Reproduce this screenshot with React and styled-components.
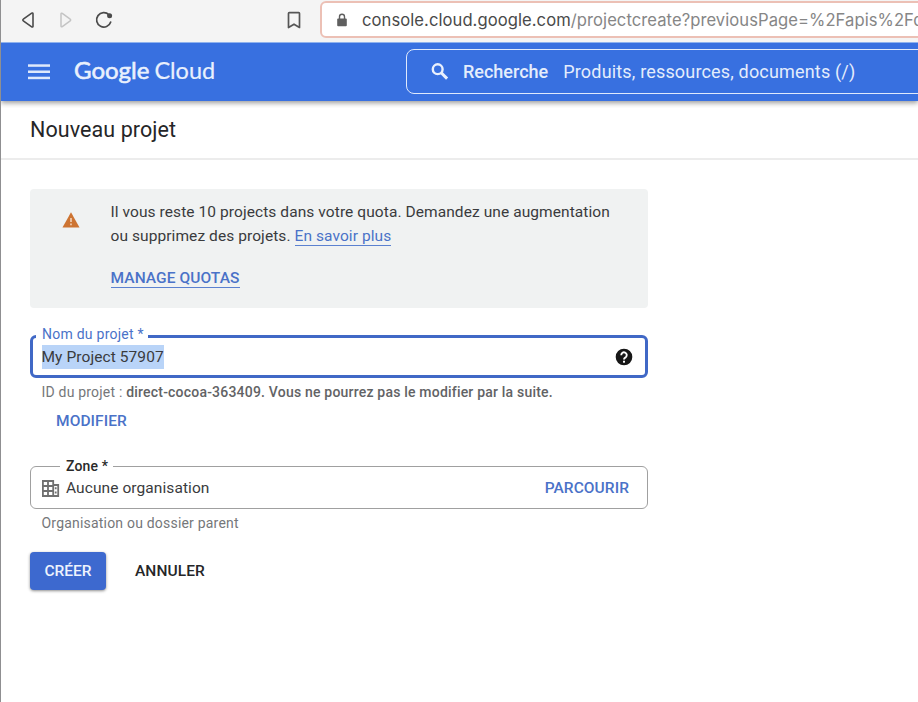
import React from "react";
import styled, { createGlobalStyle, css } from "styled-components";

const GlobalStyle = createGlobalStyle`
  *, *::before, *::after { box-sizing: border-box; }
  body {
    margin: 0;
    background: #fff;
    color: #3a3b3d;
    font-family: Roboto, "Liberation Sans", sans-serif;
    overflow: hidden;
  }
`;

const Window = styled.div`
  width: 918px;
  height: 702px;
  overflow: hidden;
  border-left: 1px solid #8f8f91;
  background: #fff;
`;

const BrowserBar = styled.div`
  display: flex;
  align-items: flex-start;
  height: 42px;
  background: #f4f4f4;
  overflow: hidden;
`;

const NavIcons = styled.div`
  display: flex;
  align-items: center;
  width: 319px;
  height: 39px;
  padding-left: 19px;
  flex: none;

  svg { display: block; flex: none; }
  svg + svg { margin-left: 17px; }
  svg:nth-child(3) { margin-left: 20px; }
  svg:last-child { margin-left: 171px; }
`;

const AddressField = styled.div`
  display: flex;
  align-items: center;
  width: 640px;
  height: 37px;
  margin-top: 1px;
  padding: 0 0 0 13px;
  flex: none;
  border: 2px solid #ecc0b5;
  border-radius: 6px;
  background: #fff;
  white-space: nowrap;
  overflow: hidden;
`;

const Url = styled.div`
  margin-left: 13px;
  font: 400 16.6px/24px Inter, "Liberation Sans", sans-serif;
  letter-spacing: 0.06px;
  color: #868686;
`;

const Host = styled.span`
  color: #4a4a4a;
`;

const HeaderClip = styled.div`
  overflow: hidden;
  height: 66px;
  margin-bottom: -7px;
`;

const CloudHeader = styled.header`
  display: flex;
  align-items: center;
  height: 59px;
  padding: 0 0 1px 27px;
  border-top: 1px solid #8fb2ee;
  background: #3870e0;
  box-shadow: 0 2px 5px rgba(0, 0, 0, 0.4);

  svg { flex: none; display: block; }
`;

const Brand = styled.div`
  display: flex;
  align-items: baseline;
  gap: 5px;
  width: 332px;
  margin: -3px 0 0 23px;
  flex: none;
  font: 400 23px/30px Lato, "Open Sans", sans-serif;
  color: #e9f0fd;
`;

const BrandName = styled.span`
  font-size: ${(p) => (p.$strong ? 24 : 23.5)}px;
  -webkit-text-stroke: ${(p) => (p.$strong ? "0.6px #e9f0fd" : "0.2px #e9f0fd")};
`;

const SearchBox = styled.div`
  display: flex;
  align-items: center;
  width: 550px;
  height: 45px;
  padding-left: 22px;
  flex: none;
  border: 1px solid #dfe9fc;
  border-radius: 8px;
  color: #e4edfc;
  font-size: 18px;
  line-height: 24px;
  white-space: nowrap;
`;

const SearchLabel = styled.span`
  margin-left: 12px;
  font-weight: 500;
`;

const SearchHint = styled.span`
  margin-left: 15px;
  letter-spacing: 0.17px;
`;

const TitleBar = styled.div`
  display: flex;
  align-items: center;
  height: 59px;
  border-bottom: 2px solid #ececec;
  padding: 0 0 0 29px;
`;

const Title = styled.h1`
  margin: 0;
  font-size: 21.5px;
  line-height: 28px;
  letter-spacing: 0.08px;
  font-weight: 400;
  color: #252628;
`;

const Form = styled.main`
  display: flex;
  flex-direction: column;
  align-items: flex-start;
  width: 618px;
  margin: 29px 0 0 29px;
`;

const Notice = styled.section`
  display: flex;
  width: 618px;
  height: 119px;
  padding: 11px 0 0 32px;
  border-radius: 4px;
  background: #f0f2f2;
  font-size: 15.5px;
  line-height: 24px;
  letter-spacing: 0.08px;

  > svg { display: block; flex: none; margin-top: 11px; }
`;

const NoticeBody = styled.div`
  margin-left: 30.5px;
  white-space: nowrap;
`;

const Paragraph = styled.p`
  margin: 0 0 18px;
`;

const Link = styled.a`
  display: inline-block;
  height: 22px;
  border-bottom: 1px solid #5b81d0;
  color: #4a72c8;
  font-weight: ${(p) => (p.$action ? 500 : 400)};
  white-space: nowrap;
`;

const Outline = styled.fieldset`
  display: flex;
  align-items: center;
  width: 618px;
  min-width: 0;
  margin: 0;
  padding: ${(p) => (p.$focused ? "0 11px 0 8.5px" : "1px 18px 0 11px")};
  border-radius: 6px;
  border: ${(p) => (p.$focused ? "3px solid #4068c6" : "1px solid #a0a0a0")};
  height: ${(p) => (p.$focused ? 51 : 52)}px;
  margin-top: ${(p) => (p.$focused ? 19 : 24)}px;
  font-size: 15.5px;
  line-height: 24px;
  letter-spacing: 0.08px;

  svg { display: block; flex: none; }
`;

const Legend = styled.legend`
  margin-left: ${(p) => (p.$focused ? -5.5 : 18)}px;
  padding: ${(p) => (p.$focused ? "0 4px 4px 6px" : "1px 5px 1px 6px")};
  font-size: 14px;
  line-height: ${(p) => (p.$focused ? 14 : 16)}px;
  letter-spacing: ${(p) => (p.$focused ? 0.25 : 0.15)}px;
  font-weight: ${(p) => (p.$focused ? 400 : 500)};
  color: ${(p) => (p.$focused ? "#4a72c8" : "#2a2a2a")};
`;

const Value = styled.span`
  flex: 1;
  margin-left: ${(p) => p.$gap || 0}px;
`;

const Selection = styled.mark`
  display: inline-block;
  height: 24px;
  background: #b9d4f8;
  color: #3a3b3d;
`;

const Hint = styled.p`
  margin: 5px 0 0 11.5px;
  font-size: 14px;
  line-height: 18px;
  letter-spacing: 0.2px;
  color: #75777a;
  white-space: nowrap;

  b { font-weight: 500; color: #626365; }
`;

const TextButton = styled.button`
  padding: 0;
  border: 0;
  background: none;
  font: 500 15.5px/24px Roboto, sans-serif;
  letter-spacing: 0.08px;
  color: ${(p) => (p.$dark ? "#252628" : "#4a72c8")};
  ${(p) =>
    p.$indent &&
    css`
      margin: 8px 0 0 26px;
    `}
`;

const Actions = styled.div`
  display: flex;
  align-items: center;
  gap: 29px;
  margin-top: 20px;
`;

const PrimaryButton = styled.button`
  width: 76px;
  height: 38px;
  padding: 0;
  border: 0;
  border-radius: 4px;
  background: #3d69cf;
  box-shadow: 0 1px 3px rgba(0, 0, 0, 0.45);
  color: #eef3fd;
  font: 500 15.5px/24px Roboto, sans-serif;
`;

const BackIcon = () => (
  <svg width="16" height="18" viewBox="0 0 16 18" fill="none" stroke="#4b4b4b" strokeWidth="1.6" strokeLinejoin="round">
    <path d="M13 2.800v12.400c0 .8-.7 1-1.300.6L3.300 9.900c-.6-.4-.6-1.300 0-1.700l8.400-6c.6-.4 1.300-.1 1.300.6z" />
  </svg>
);
const ForwardIcon = () => (
  <svg width="20" height="18" viewBox="0 0 20 18" fill="none" stroke="#c4c4c4" strokeWidth="1.500" strokeLinejoin="round">
    <path d="M8 3v12c0 .8.7 1 1.300.6l7.900-5.700c.6-.4.6-1.300 0-1.700L9.300 2.400C8.700 2 8 2.200 8 3z" />
  </svg>
);
const ReloadIcon = () => (
  <svg width="22" height="20" viewBox="0 0 22 20" fill="none" stroke="#4b4b4b" strokeWidth="1.700">
    <path d="M16 4.900A7.200 7.200 0 1 0 17.700 12" strokeLinecap="round" />
    <circle cx="16.600" cy="5.700" r="2.500" fill="#4b4b4b" stroke="none" />
  </svg>
);
const BookmarkIcon = () => (
  <svg width="16" height="18" viewBox="0 0 16 18" fill="none" stroke="#555" strokeWidth="1.700" strokeLinejoin="round">
    <path d="M2.500 2.500c0-.5.300-.8.800-.8h9.400c.5 0 .8.300.8.800v14L8 13.200l-5.500 3.300z" />
  </svg>
);
const LockIcon = () => (
  <svg width="14" height="16" viewBox="0 0 14 16">
    <rect x="2.200" y="6.500" width="9.600" height="7.800" rx="1" fill="#5f5f5f" />
    <path d="M4.500 7V4.700a2.500 2.500 0 0 1 5 0V7" fill="none" stroke="#5f5f5f" strokeWidth="1.400" />
  </svg>
);
const MenuIcon = () => (
  <svg width="23" height="16" viewBox="0 0 23 16" fill="#dfe9fb">
    <rect y="0.300" width="22" height="2.500" />
    <rect y="6.500" width="22" height="2.500" />
    <rect y="12.700" width="22" height="2.500" />
  </svg>
);
const SearchIcon = () => (
  <svg width="22" height="22" viewBox="0 0 22 22" fill="none" stroke="#e9f0fd">
    <circle cx="8.700" cy="8.200" r="4.900" strokeWidth="2.400" />
    <path d="M12.200 11.700l5.900 5.900" strokeWidth="3" />
  </svg>
);
const WarningIcon = () => (
  <svg width="18" height="18" viewBox="0 0 18 18">
    <path d="M9 1.200L17.500 16.500H.5z" fill="#cd7432" />
    <path d="M9 7v4M9 12.500v1.700" stroke="#f3d9c4" strokeWidth="1.500" />
  </svg>
);
const HelpIcon = () => (
  <svg width="20" height="20" viewBox="0 0 24 24">
    <circle cx="12" cy="12" r="10" fill="#171717" />
    <path d="M8.700 9.800a3.300 3.300 0 1 1 5.400 2.400C12.800 13.200 12 13.500 12 15.100" fill="none" stroke="#fff" strokeWidth="2.300" />
    <rect x="10.800" y="16.500" width="2.400" height="2.300" fill="#fff" />
  </svg>
);
const BuildingIcon = () => (
  <svg width="18" height="17" viewBox="0 0 18 17" fill="none" stroke="#707070" strokeWidth="1.800">
    <path d="M.9 1h10.300v15H.9zM6 1v15M.9 6h10.300M.9 11h10.300" />
    <path d="M11.200 5h5v11h-5M13.700 7.300v2M13.700 11.500v2" />
  </svg>
);

export default function App() {
  return (
    <>
      <GlobalStyle />
      <Window>
        <BrowserBar>
          <NavIcons>
            <BackIcon />
            <ForwardIcon />
            <ReloadIcon />
            <BookmarkIcon />
          </NavIcons>
          <AddressField>
            <LockIcon />
            <Url>
              <Host>console.cloud.google.com</Host>/projectcreate?previousPage=%2Fapis%2Fd
            </Url>
          </AddressField>
        </BrowserBar>
        <HeaderClip>
          <CloudHeader>
            <MenuIcon />
            <Brand>
              <BrandName $strong>Google</BrandName>
              <BrandName>Cloud</BrandName>
            </Brand>
            <SearchBox>
              <SearchIcon />
              <SearchLabel>Recherche</SearchLabel>
              <SearchHint>Produits, ressources, documents (/)</SearchHint>
            </SearchBox>
          </CloudHeader>
        </HeaderClip>
        <TitleBar>
          <Title>Nouveau projet</Title>
        </TitleBar>
        <Form>
          <Notice>
            <WarningIcon />
            <NoticeBody>
              <Paragraph>
                Il vous reste 10 projects dans votre quota. Demandez une augmentation
                <br />
                ou supprimez des projets. <Link>En savoir plus</Link>
              </Paragraph>
              <Link $action>MANAGE QUOTAS</Link>
            </NoticeBody>
          </Notice>
          <Outline $focused>
            <Legend $focused>Nom du projet *</Legend>
            <Value>
              <Selection>My Project 57907</Selection>
            </Value>
            <HelpIcon />
          </Outline>
          <Hint>
            ID du projet : <b>direct-cocoa-363409. Vous ne pourrez pas le modifier par la suite.</b>
          </Hint>
          <TextButton $indent>MODIFIER</TextButton>
          <Outline>
            <Legend>Zone *</Legend>
            <BuildingIcon />
            <Value $gap={6}>Aucune organisation</Value>
            <TextButton>PARCOURIR</TextButton>
          </Outline>
          <Hint>Organisation ou dossier parent</Hint>
          <Actions>
            <PrimaryButton>CRÉER</PrimaryButton>
            <TextButton $dark>ANNULER</TextButton>
          </Actions>
        </Form>
      </Window>
    </>
  );
}
